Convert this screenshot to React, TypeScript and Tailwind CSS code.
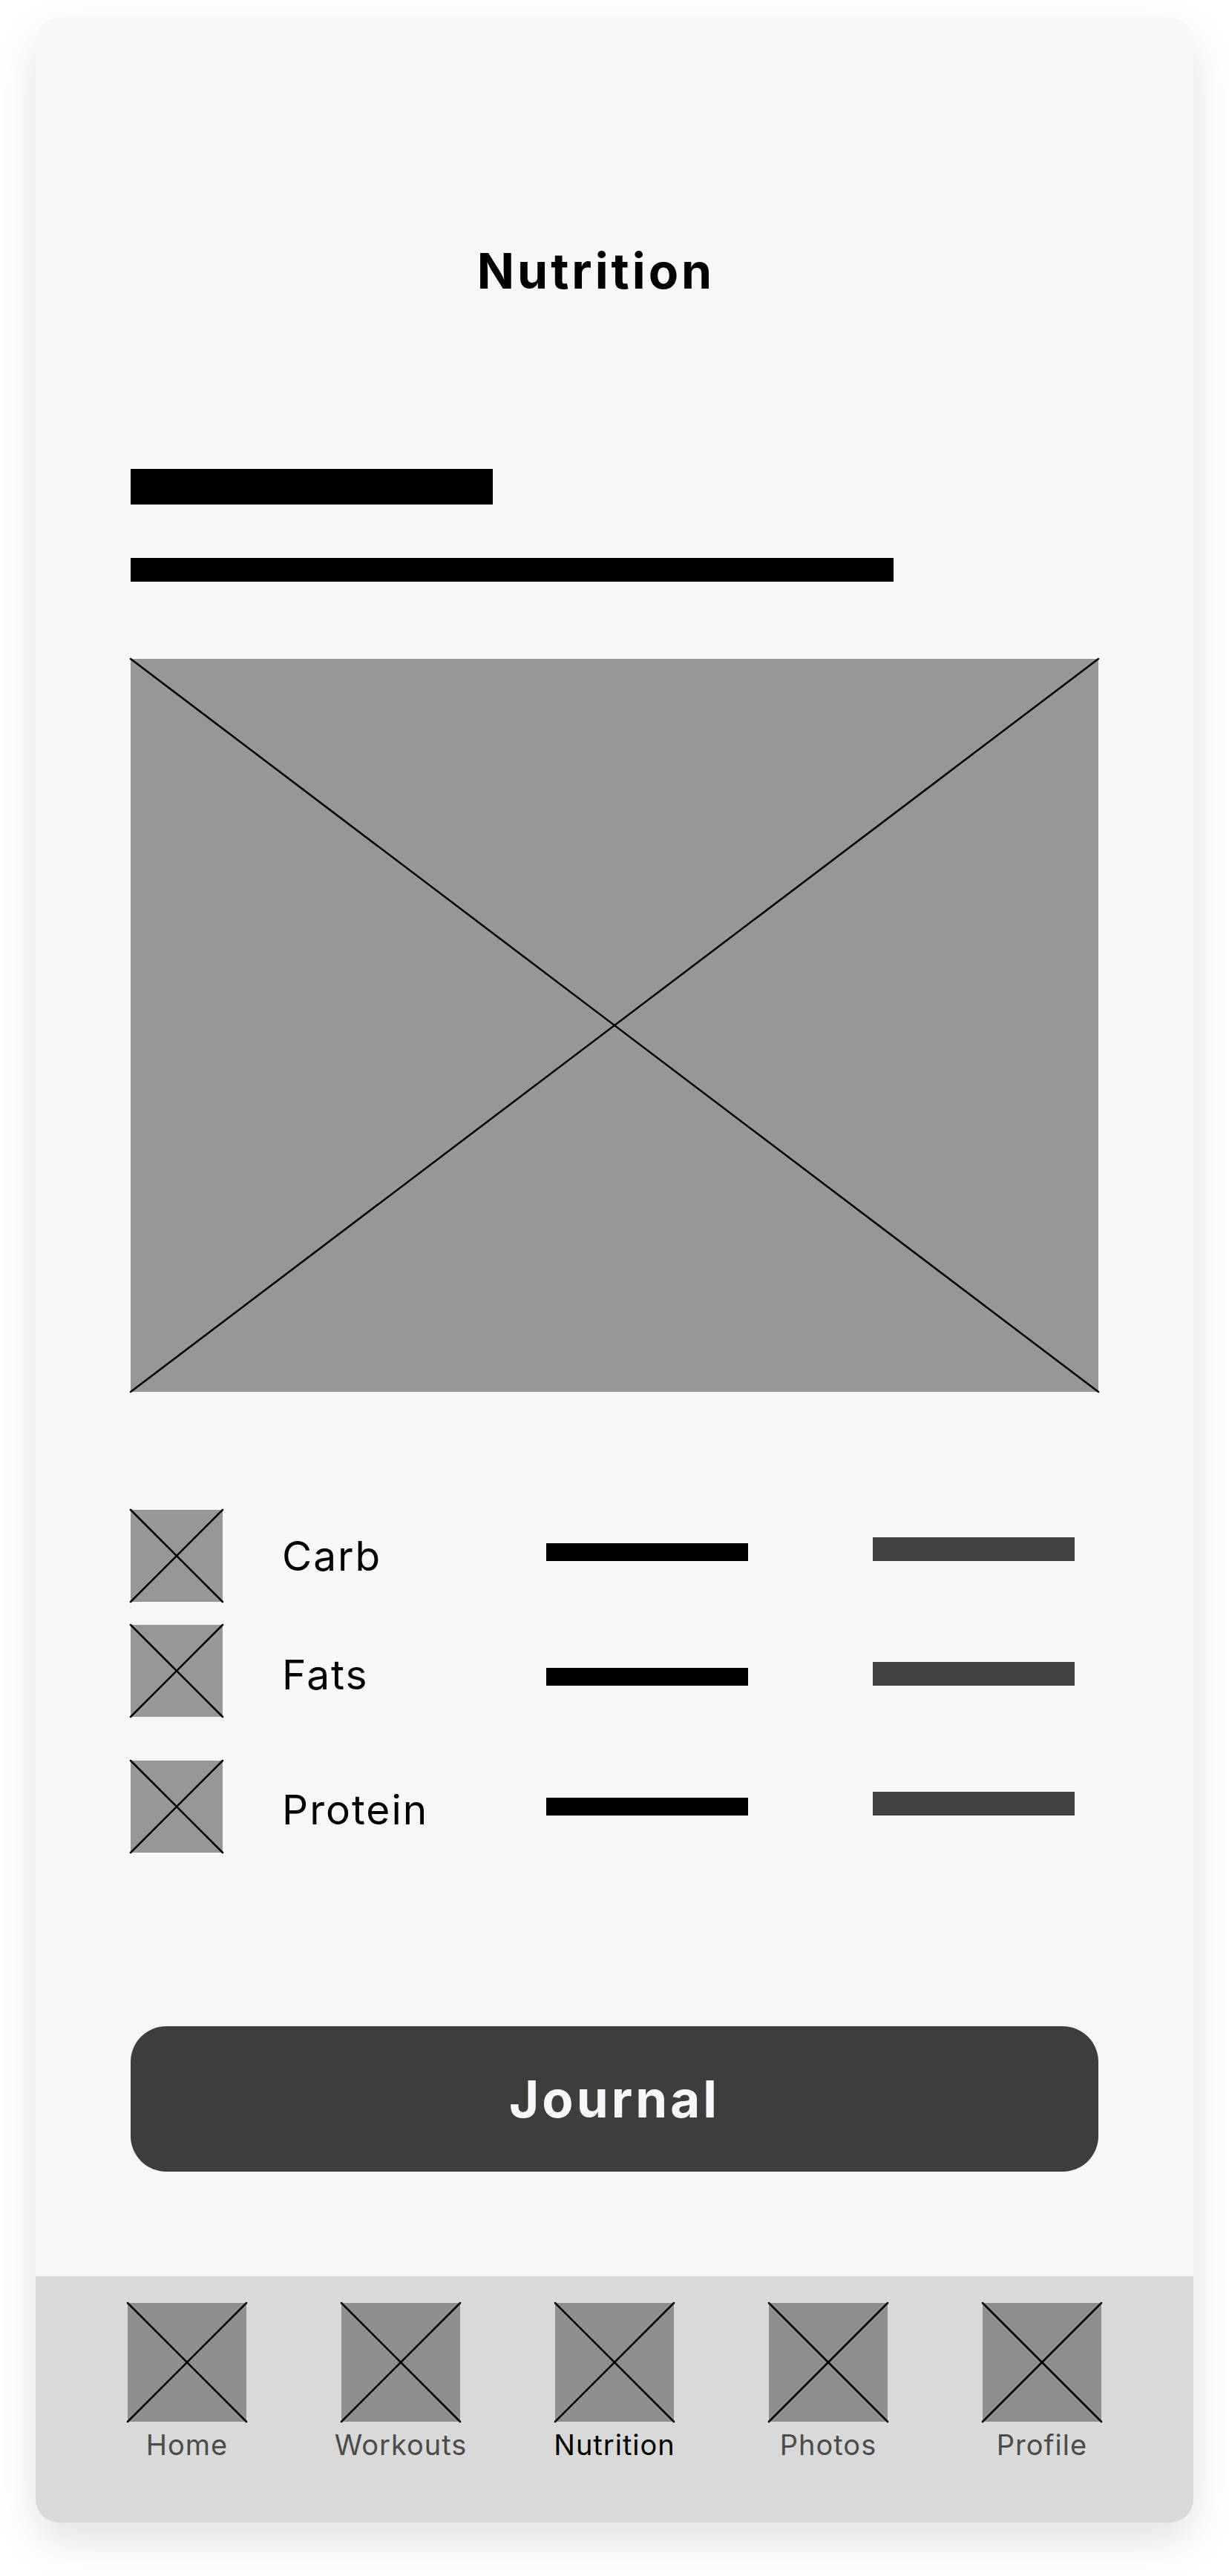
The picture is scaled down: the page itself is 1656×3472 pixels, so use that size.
import React from 'react';

const font = { fontFamily: 'Inter, "Noto Sans", sans-serif' };

// grey box with an X through it, the wireframe placeholder
const Placeholder: React.FC<{ className: string }> = ({ className }) => (
  <div className={`relative shrink-0 ${className}`}>
    <svg className="absolute inset-0 h-full w-full overflow-visible" viewBox="0 0 100 100" preserveAspectRatio="none">
      <line x1="0" y1="0" x2="100" y2="100" stroke="#000" strokeWidth="2.5" strokeLinecap="round" vectorEffect="non-scaling-stroke" />
      <line x1="100" y1="0" x2="0" y2="100" stroke="#000" strokeWidth="2.5" strokeLinecap="round" vectorEffect="non-scaling-stroke" />
    </svg>
  </div>
);

const macros = [
  { label: 'Carb', row: 'mt-[159px]', text: 'mt-0', bars: 'mb-[18px]' },
  { label: 'Fats', row: 'mt-[31px]', text: 'mt-[10px]', bars: 'mt-[8px]' },
  { label: 'Protein', row: 'mt-[59px]', text: 'mt-[8px]', bars: 'mb-[8px]' },
];

const tabs = ['Home', 'Workouts', 'Nutrition', 'Photos', 'Profile'];

export default function App() {
  return (
    <div className="h-[3472px] w-full bg-white pt-[24px]" style={font}>
      <div className="mx-auto flex h-[3376px] w-[1560px] flex-col overflow-hidden rounded-[32px] bg-[#f7f7f7] shadow-[0_24px_60px_rgba(0,0,0,0.12)]">
        <div className="flex flex-1 flex-col px-[128px] pt-[308px]">
          <div className="flex justify-center pr-[50px]">
            <h1 className="text-[66px] font-bold leading-none tracking-[4px] text-black">Nutrition</h1>
          </div>

          <div className="mt-[234px] h-[48px] w-[488px] bg-black" />
          <div className="mt-[72px] h-[32px] w-[1028px] bg-black" />

          <Placeholder className="mt-[104px] h-[988px] w-full bg-[#979797]" />

          {macros.map((m) => (
            <div key={m.label} className={`flex items-center ${m.row}`}>
              <Placeholder className="h-[124px] w-[124px] bg-[#979797]" />
              <span className={`ml-[80px] w-[356px] text-[55px] leading-none tracking-[2px] text-black ${m.text}`}>{m.label}</span>
              <div className={`flex items-end ${m.bars}`}>
                <div className="h-[24px] w-[272px] bg-black" />
                <div className="ml-[168px] h-[32px] w-[272px] bg-[#424242]" />
              </div>
            </div>
          ))}

          <button className="mt-[234px] flex h-[196px] w-full items-center justify-center rounded-[48px] bg-[#3d3d3d]">
            <span className="text-[69px] font-bold leading-none tracking-[4px] text-[#f5f7fa]">Journal</span>
          </button>
        </div>

        <nav className="flex h-[332px] shrink-0 justify-center gap-[128px] bg-[#d9d9d9] pt-[36px]">
          {tabs.map((t) => (
            <div key={t} className="flex w-[160px] flex-col items-center">
              <Placeholder className="h-[160px] w-[160px] bg-[#8f8f8f]" />
              <span className={`mt-[12px] whitespace-nowrap text-[38px] font-normal leading-none tracking-[1px] ${t === 'Nutrition' ? 'text-black' : 'text-[#4b4b4b]'}`}>
                {t}
              </span>
            </div>
          ))}
        </nav>
      </div>
    </div>
  );
}
